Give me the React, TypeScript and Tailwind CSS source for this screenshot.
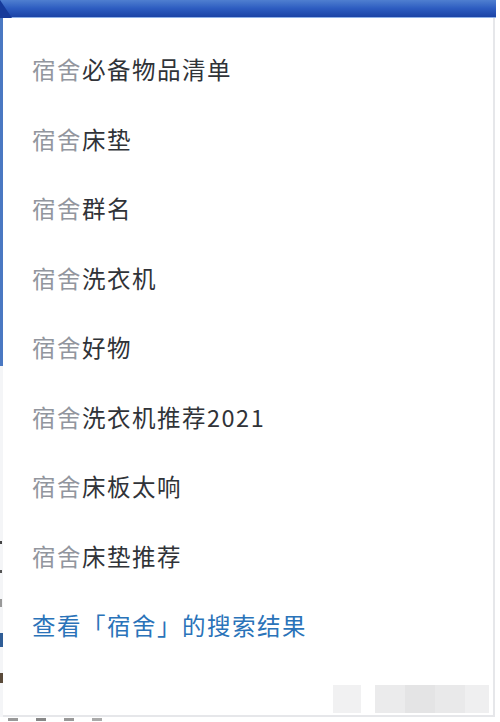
import React from 'react';

const suggestions = [
  '必备物品清单',
  '床垫',
  '群名',
  '洗衣机',
  '好物',
  '洗衣机推荐2021',
  '床板太响',
  '床垫推荐',
];

const font = "font-['Noto_Sans_CJK_SC','Noto_Sans',sans-serif]";

const App: React.FC = () => {
  return (
    <div className={`relative w-[500px] h-[722px] overflow-hidden bg-white ${font}`}>
      {/* header strip of the page behind */}
      <div className="h-[18px] w-[496px] bg-gradient-to-b from-[#4f7fd0] via-[#2d5cc0] to-[#1b43a6] border-b border-[#8fb0e6]" />
      <div className="absolute left-0 top-0 w-[12px] h-[18px] bg-[#163a9a] [clip-path:polygon(0_0,100%_100%,0_100%)]" />

      <div className="flex h-[699px]">
        {/* left edge of the page behind */}
        <div className="w-[3px] flex flex-col">
          <div className="h-[348px] bg-[#4a78c2]" />
          <div className="flex-1 flex flex-col items-start gap-[26px] pt-[175px] bg-[#f4f5f7]">
            <div className="w-[2px] h-[3px] bg-[#444]" />
            <div className="w-[2px] h-[3px] bg-[#555]" />
            <div className="w-[2px] h-[8px] bg-[#999]" />
            <div className="w-[3px] h-[14px] bg-[#2f5d96]" />
            <div className="w-[3px] h-[10px] bg-[#5a4a3a]" />
          </div>
        </div>

        {/* suggestion dropdown */}
        <div className="relative w-[492px] bg-white border-r-2 border-b-2 border-[#e6e7ea] pt-[17px]">
          {suggestions.map((s) => (
            <div key={s} className="h-[69.5px] flex items-center pl-[29px] text-[23.5px] tracking-[1.5px] leading-none">
              <span className="text-[#92969e]">宿舍</span>
              <span className="text-[#303338]">{s}</span>
            </div>
          ))}
          <div className="h-[69.5px] flex items-center pl-[29px] text-[23.5px] tracking-[1.5px] leading-none text-[#2a73b9]">
            查看「宿舍」的搜索结果
          </div>

          {/* blurred watermark */}
          <div className="absolute right-[4px] bottom-[2px] flex">
            <div className="w-[28px] h-[28px] bg-[#f1f1f2]" />
            <div className="w-[14px] h-[28px] bg-white" />
            <div className="w-[30px] h-[28px] bg-[#ebebec]" />
            <div className="w-[30px] h-[28px] bg-[#e4e4e5]" />
            <div className="w-[30px] h-[28px] bg-[#e9e9ea]" />
            <div className="w-[24px] h-[28px] bg-[#efeff0]" />
          </div>
        </div>
      </div>

      <div className="flex gap-[18px] pl-[8px] pt-[1px]">
        <div className="w-[10px] h-[3px] bg-[#999]" />
        <div className="w-[10px] h-[3px] bg-[#888]" />
        <div className="w-[10px] h-[3px] bg-[#999]" />
        <div className="w-[10px] h-[3px] bg-[#aaa]" />
      </div>
    </div>
  );
};

export default App;
